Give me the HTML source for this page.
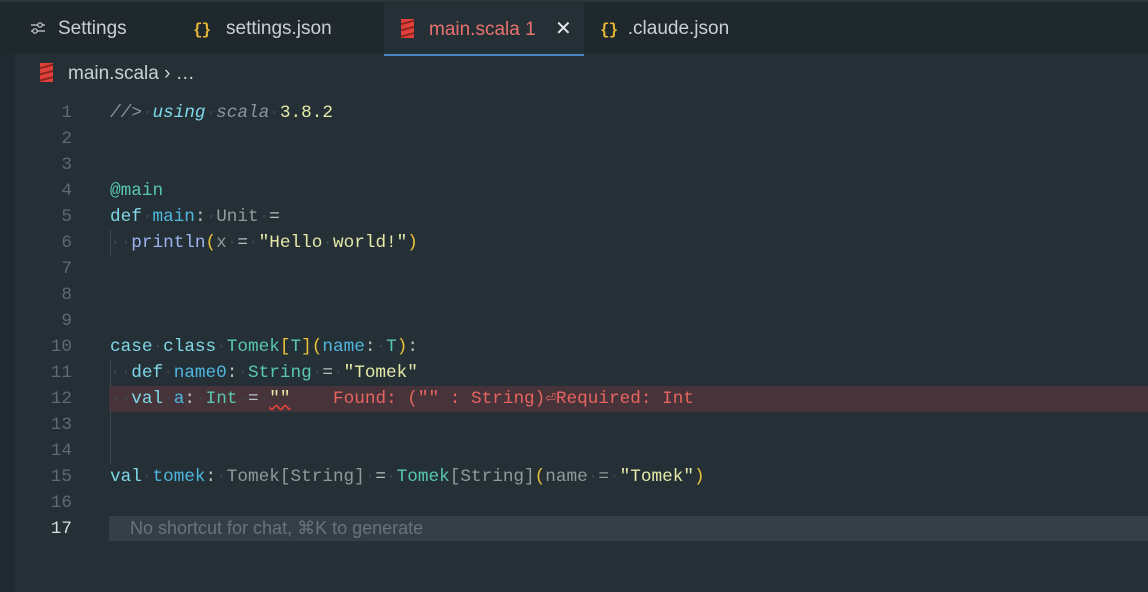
<!DOCTYPE html>
<html><head><meta charset="utf-8"><style>
*{margin:0;padding:0;box-sizing:border-box}
body{width:1148px;height:592px;overflow:hidden;background:#252f36;font-family:"Liberation Sans",sans-serif;position:relative}
.tabs{position:absolute;left:0;top:0;width:1148px;height:54px;background:#1f282d;border-top:2px solid #2c363c}
.tab{position:absolute;top:1px;height:52px;line-height:52px;font-size:19px;color:#c9d1d5}
.active{background:#252f36;border-bottom:2px solid #4a86c0;height:53px}
.br{color:#e5b634;font-weight:bold;font-family:"Liberation Mono",monospace;font-size:16px;letter-spacing:-1px}
.strip{position:absolute;left:0;top:54px;width:14px;height:538px;background:#20292f}
.crumb{position:absolute;left:40px;top:63px;font-size:19px;color:#c9d1d5}
.code{position:absolute;left:0;top:100px;width:1148px;font-family:"Liberation Mono",monospace;font-size:17.7px}
.ln{position:absolute;height:26px;line-height:26px;width:1148px}
.num{position:absolute;right:1076px;color:#5e6a70;text-align:right}
.t{position:absolute;left:110px;color:#b6c0c5;white-space:pre}
.k{color:#7fd8e8}.ty{color:#58c7b0}.id{color:#4fb6de}.s{color:#e6eaa8}.d{color:#3c474d}.p{color:#e8c33a}.g{color:#8f9a9f}.c{color:#8a969c;font-style:italic}.f{color:#9cb3f0}
.guide{position:absolute;left:110px;width:1px;background:#3e494f}
.scala{display:inline-block;width:13px;height:19px;vertical-align:-3px;margin-right:15px;background:repeating-linear-gradient(165deg,#e0403a 0 4px,#8e2420 4px 6px)}
</style></head><body>
<div class="tabs">
 <div class="tab" style="left:30px"><svg width="16" height="14" viewBox="0 0 16 14" style="vertical-align:-1px;margin-right:12px"><path d="M1 4H15M1 10H15" stroke="#c9d1d5" stroke-width="1.2"/><circle cx="10" cy="4" r="2.2" fill="#1f282d" stroke="#c9d1d5" stroke-width="1.2"/><circle cx="5" cy="10" r="2.2" fill="#1f282d" stroke="#c9d1d5" stroke-width="1.2"/></svg>Settings</div>
 <div class="tab" style="left:193px"><span class="br">{}</span>&nbsp;&nbsp; settings.json</div>
 <div class="tab active" style="left:384px;width:200px;padding-left:17px;color:#e8736e"><span class="scala"></span>main.scala 1 <span style="color:#e6e9eb;margin-left:14px;font-size:20px">✕</span></div>
 <div class="tab" style="left:600px"><span class="br">{}</span>&nbsp; .claude.json</div>
</div>
<div class="strip"></div>
<div class="crumb"><span class="scala"></span>main.scala › …</div>
<div class="code">
<div class="guide" style="top:130px;height:26px"></div>
<div class="guide" style="top:260px;height:104px"></div>
<div class="ln" style="top:0"><span class="num">1</span><span class="t"><span class="c">//&gt;<span class="d">·</span></span><span class="k" style="font-style:italic">using</span><span class="d">·</span><span class="c">scala</span><span class="d">·</span><span class="s">3.8.2</span></span></div>
<div class="ln" style="top:26px"><span class="num">2</span></div>
<div class="ln" style="top:52px"><span class="num">3</span></div>
<div class="ln" style="top:78px"><span class="num">4</span><span class="t"><span class="ty">@main</span></span></div>
<div class="ln" style="top:104px"><span class="num">5</span><span class="t"><span class="k">def</span><span class="d">·</span><span class="id">main</span>:<span class="d">·</span><span class="g">Unit</span><span class="d">·</span>=</span></div>
<div class="ln" style="top:130px"><span class="num">6</span><span class="t"><span class="d">··</span><span class="f">println</span><span class="p">(</span><span class="g">x</span><span class="d">·</span>=<span class="d">·</span><span class="s">"Hello<span class="d">·</span>world!"</span><span class="p">)</span></span></div>
<div class="ln" style="top:156px"><span class="num">7</span></div>
<div class="ln" style="top:182px"><span class="num">8</span></div>
<div class="ln" style="top:208px"><span class="num">9</span></div>
<div class="ln" style="top:234px"><span class="num">10</span><span class="t"><span class="k">case</span><span class="d">·</span><span class="k">class</span><span class="d">·</span><span class="ty">Tomek</span><span class="p">[</span><span class="ty">T</span><span class="p">](</span><span class="id">name</span>:<span class="d">·</span><span class="ty">T</span><span class="p">)</span>:</span></div>
<div class="ln" style="top:260px"><span class="num">11</span><span class="t"><span class="d">··</span><span class="k">def</span><span class="d">·</span><span class="id">name0</span>:<span class="d">·</span><span class="ty">String</span><span class="d">·</span>=<span class="d">·</span><span class="s">"Tomek"</span></span></div>
<div style="position:absolute;left:109px;top:286px;width:1039px;height:26px;background:#46343a"></div>
<div class="ln" style="top:286px"><span class="num">12</span><span class="t"><span class="d">··</span><span class="k">val</span><span class="d">·</span><span class="id">a</span>:<span class="d">·</span><span class="ty">Int</span><span class="d">·</span>=<span class="d">·</span><span class="s" style="text-decoration:underline wavy #e0403a">""</span>    <span style="color:#e8645f">Found: ("" : String)⏎Required: Int</span></span></div>
<div class="ln" style="top:312px"><span class="num">13</span></div>
<div class="ln" style="top:338px"><span class="num">14</span></div>
<div class="ln" style="top:364px"><span class="num">15</span><span class="t"><span class="k">val</span><span class="d">·</span><span class="id">tomek</span>:<span class="d">·</span><span class="g">Tomek[String]</span><span class="d">·</span>=<span class="d">·</span><span class="ty">Tomek</span><span class="g">[String]</span><span class="p">(</span><span class="g">name</span><span class="d">·</span><span class="g">=</span><span class="d">·</span><span class="s">"Tomek"</span><span class="p">)</span></span></div>
<div class="ln" style="top:390px"><span class="num">16</span></div>
<div class="ln" style="top:416px"><span class="num" style="color:#d5dcdf">17</span><div style="position:absolute;left:109px;top:0px;width:1039px;height:25px;background:#343e45;font-family:'Liberation Sans',sans-serif;font-size:18px;color:#68747a;line-height:25px;padding-left:21px">No shortcut for chat, ⌘K to generate</div></div>
</div>
</body></html>
